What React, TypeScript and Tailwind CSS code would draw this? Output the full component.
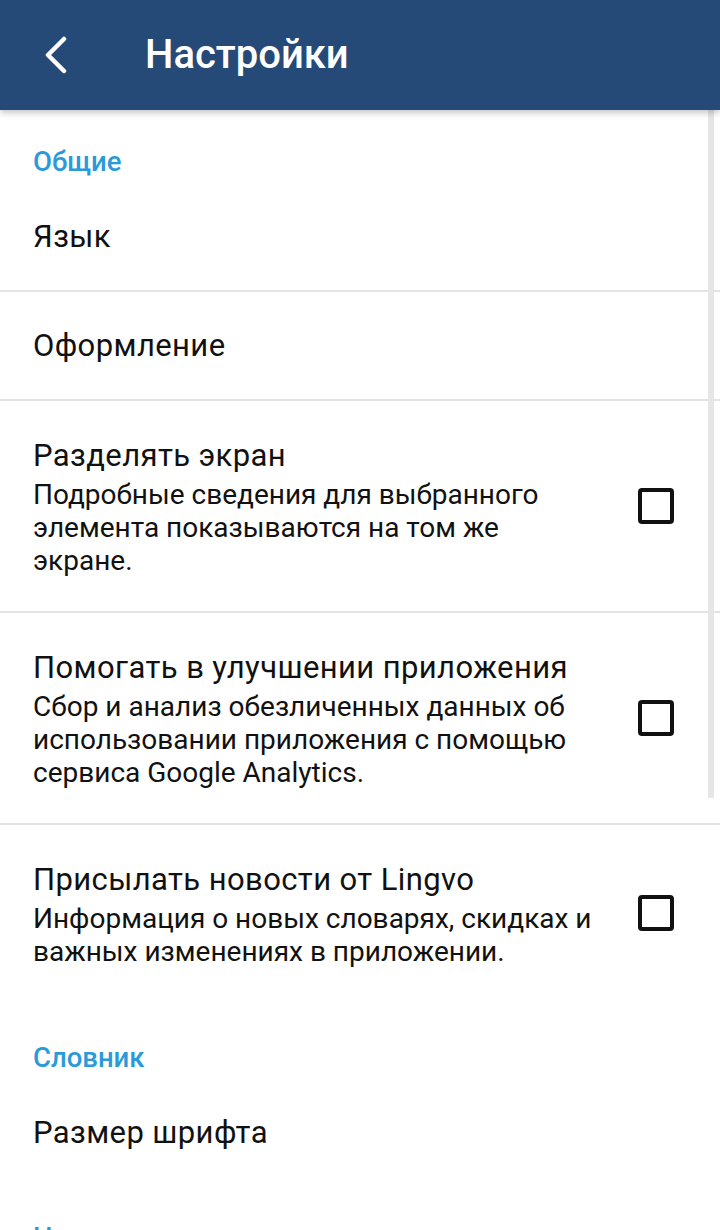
import React from 'react';

type Item = {
  title: string;
  lines?: string[];
  checkbox?: boolean;
  divider?: boolean;
};

const Category = ({ label, top = 'pt-[36px]' }: { label: string; top?: string }) => (
  <div className={`${top} pb-[5px] px-[33px]`}>
    <div className="text-[27.5px] leading-[32px] font-medium text-[#2a9ad9]">{label}</div>
  </div>
);

const Checkbox = () => (
  <div className="w-[36px] h-[36px] border-[4px] border-[#111] rounded-[4px] bg-white shrink-0 -translate-y-[2px]" />
);

const Row = ({ item }: { item: Item }) => {
  if (!item.lines) {
    return (
      <div className="h-[107px] px-[33px] flex items-center">
        <span className="text-[31px] leading-[36px] tracking-[0.4px] text-[#111]">{item.title}</span>
      </div>
    );
  }
  return (
    <div className="pt-[37px] pb-[34px] pl-[33px] pr-[46px] flex items-center justify-between">
      <div className="flex flex-col">
        <div className="text-[31px] leading-[36px] tracking-[0.4px] text-[#111] whitespace-nowrap">{item.title}</div>
        <div className="mt-[4px] text-[28px] leading-[33px] text-[#111] whitespace-nowrap">
          {item.lines.map((l, i) => (
            <div key={i}>{l}</div>
          ))}
        </div>
      </div>
      {item.checkbox && <Checkbox />}
    </div>
  );
};

const Divider = () => <div className="h-[2px] bg-[#e3e3e3]" />;

export default function App() {
  const general: Item[] = [
    { title: 'Язык', divider: true },
    { title: 'Оформление', divider: true },
    {
      title: 'Разделять экран',
      lines: ['Подробные сведения для выбранного', 'элемента показываются на том же', 'экране.'],
      checkbox: true,
      divider: true,
    },
    {
      title: 'Помогать в улучшении приложения',
      lines: ['Сбор и анализ обезличенных данных об', 'использовании приложения с помощью', 'сервиса Google Analytics.'],
      checkbox: true,
      divider: true,
    },
    {
      title: 'Присылать новости от Lingvo',
      lines: ['Информация о новых словарях, скидках и', 'важных изменениях в приложении.'],
      checkbox: true,
    },
  ];

  return (
    <div className="relative w-[720px] h-[1230px] overflow-hidden bg-white font-['Roboto',sans-serif]">
      {/* App bar */}
      <div className="relative z-10 h-[110px] bg-[#264a77] flex items-center shadow-[0_3px_6px_rgba(0,0,0,0.22)]">
        <div className="w-[145px] flex pl-[42px]">
          <svg width="26" height="38" viewBox="0 0 26 38" fill="none">
            <path d="M22 3 L6 19 L22 35" stroke="white" strokeWidth="4.5" strokeLinecap="round" strokeLinejoin="round" />
          </svg>
        </div>
        <h1 className="text-[40px] leading-none font-medium text-white">Настройки</h1>
      </div>

      {/* Scrollbar */}
      <div className="absolute right-[6px] top-[110px] w-[6px] h-[688px] bg-[#e6e6e6]" />

      <Category label="Общие" />
      {general.map((item, i) => (
        <React.Fragment key={i}>
          <Row item={item} />
          {item.divider && <Divider />}
        </React.Fragment>
      ))}

      <Category label="Словник" top="pt-[40px]" />
      <Row item={{ title: 'Размер шрифта' }} />

      <Category label="Навигация" />
    </div>
  );
}
